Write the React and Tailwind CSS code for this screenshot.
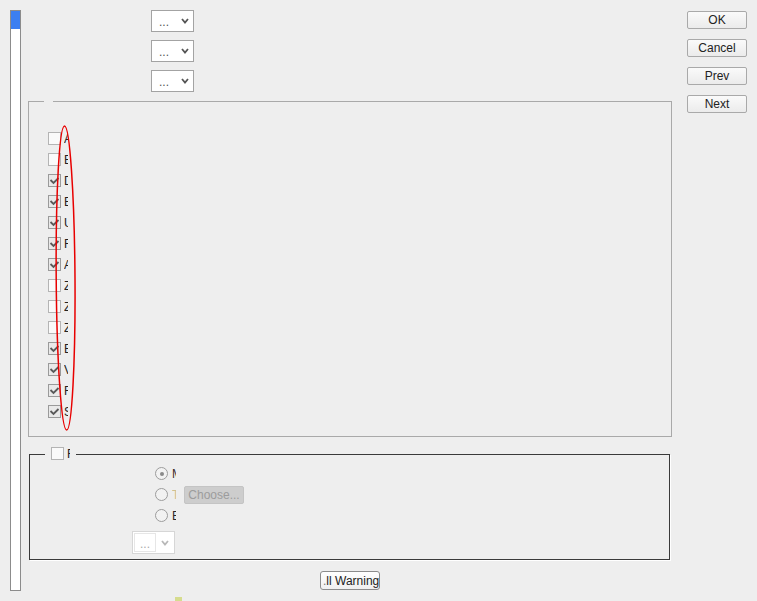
import React from "react";

const FONT = { fontFamily: '"Liberation Sans", Arial, sans-serif' };

function Chevron({ color = "#555" }) {
  return (
    <svg width="8" height="6" viewBox="0 0 8 6" className="block">
      <path d="M1 1 L4 4.5 L7 1" fill="none" stroke={color} strokeWidth="1.8" />
    </svg>
  );
}

function Drop() {
  return (
    <div className="w-[43px] h-[22px] border border-[#a3a3a3] bg-white flex items-center justify-between pl-[7px] pr-[4px]">
      <span className="text-[12px] leading-none text-[#555] mt-[2px]">...</span>
      <Chevron />
    </div>
  );
}

function Check({ checked }) {
  return (
    <div
      className={
        "w-[13px] h-[13px] border shrink-0 flex items-center justify-center " +
        (checked ? "border-[#9a9a9a] bg-[#e9e9e9]" : "border-[#b4b4b4] bg-[#fafafa]")
      }
    >
      {checked && (
        <svg width="11" height="11" viewBox="0 0 11 11" className="block">
          <path d="M1.5 5 L4.5 8 L9.5 3" fill="none" stroke="#5a5a5a" strokeWidth="1.8" />
        </svg>
      )}
    </div>
  );
}

function Radio({ checked }) {
  return (
    <div className="w-[13px] h-[13px] rounded-full border border-[#9c9c9c] bg-[#f2f2f2] shrink-0 flex items-center justify-center">
      {checked && <div className="w-[4px] h-[4px] rounded-full bg-[#8a8a8a]" />}
    </div>
  );
}

const items = [
  ["A", false], ["B", false], ["D", true], ["E", true], ["U", true], ["F", true], ["A", true],
  ["Z", false], ["Z", false], ["Z", false], ["E", true], ["V", true], ["F", true], ["S", true],
];

function SideButton({ children }) {
  return (
    <div className="w-[60px] h-[18px] border border-[#a9a9a9] rounded-[2px] bg-gradient-to-b from-[#fafafa] to-[#ebebeb] flex items-center justify-center text-[12px] leading-none text-[#222]">
      {children}
    </div>
  );
}

export default function App() {
  return (
    <div className="w-[757px] h-[601px] bg-[#eeeeee] flex relative overflow-hidden" style={FONT}>
      {/* left progress bar */}
      <div className="ml-[10px] mt-[10px] w-[11px] h-[581px] border border-[#8c8c8c] bg-white shrink-0">
        <div className="h-[18px] bg-[#3c7ff1]" />
      </div>

      {/* main column */}
      <div className="ml-[7px] w-[644px] flex flex-col shrink-0">
        <div className="ml-[123px] mt-[10px] flex flex-col gap-[8px]">
          <Drop />
          <Drop />
          <Drop />
        </div>

        {/* group 1 */}
        <div className="mt-[9px] relative h-[336px] border border-[#a9a9a9]">
          <span className="absolute -top-px left-[15px] w-[9px] h-px bg-[#eeeeee]" />
          <div className="pt-[30px] pl-[19px] flex flex-col gap-[8px]">
            {items.map(([l, c], i) => (
              <div key={i} className="flex items-center h-[13px]">
                <Check checked={c} />
                <div className="ml-[3px] w-[4px] overflow-hidden text-[12px] leading-none text-[#222]">
                  {l}
                </div>
              </div>
            ))}
          </div>
        </div>

        {/* group 2 */}
        <div className="mt-[17px] ml-[1px] w-[641px] h-[106px] border border-[#3a3a3a] shadow-[1px_1px_0_#ffffff] relative">
          <div className="absolute -top-[8px] left-[15px] px-[6px] bg-[#eeeeee] flex items-center h-[13px]">
            <Check checked={false} />
            <div className="ml-[3px] w-[3px] overflow-hidden text-[12px] leading-none text-[#222]">F</div>
          </div>
          <div className="pt-[8px] flex flex-col">
            <div className="ml-[125px] flex flex-col">
              <div className="h-[21px] flex items-center">
                <Radio checked />
                <div className="ml-[4px] w-[4px] overflow-hidden text-[12px] leading-none text-[#3a2a2a]">M</div>
              </div>
              <div className="h-[21px] flex items-center">
                <Radio />
                <div className="ml-[4px] w-[4px] overflow-hidden text-[12px] leading-none text-[#d0c090]">T</div>
                <div className="ml-[8px] w-[60px] h-[18px] rounded-[2px] bg-[#cdcdcd] border border-[#c4c4c4] flex items-center justify-center text-[12px] leading-none text-[#9c9c9c]">
                  Choose...
                </div>
              </div>
              <div className="h-[21px] flex items-center">
                <Radio />
                <div className="ml-[4px] w-[4px] overflow-hidden text-[12px] leading-none text-[#2a2a2a]">E</div>
              </div>
            </div>
            <div className="ml-[102px] mt-[5px] w-[43px] h-[23px] border border-[#d6d6d6] bg-white flex items-center p-[1px]">
              <div className="w-[22px] h-[19px] border border-[#e6e6e6] flex items-center justify-center">
                <span className="text-[12px] leading-none text-[#aaa] mt-[2px]">...</span>
              </div>
              <div className="flex-1 flex justify-center">
                <Chevron color="#b8b8b8" />
              </div>
            </div>
          </div>
        </div>

        <div className="mt-[11px] ml-[292px] w-[60px] h-[19px] border border-[#8c8c8c] rounded-[3px] bg-gradient-to-b from-[#ffffff] to-[#f0f0f0] flex items-center pl-[2px] text-[12px] leading-none text-[#222] overflow-hidden whitespace-nowrap">
          <span className="text-[#777]">.</span>ll Warning
        </div>
        <div className="mt-[7px] ml-[147px] w-[7px] h-[4px] bg-[#d6dc8e]" />
      </div>

      {/* right buttons */}
      <div className="ml-[15px] mt-[11px] flex flex-col gap-[10px]">
        <SideButton>OK</SideButton>
        <SideButton>Cancel</SideButton>
        <SideButton>Prev</SideButton>
        <SideButton>Next</SideButton>
      </div>

      {/* red annotation ellipse */}
      <svg className="absolute left-0 top-0 pointer-events-none" width="757" height="601">
        <ellipse cx="65.6" cy="278" rx="9.4" ry="152" fill="none" stroke="#e80000" strokeWidth="1.5" transform="rotate(-0.4 65.6 278)" />
      </svg>
    </div>
  );
}
